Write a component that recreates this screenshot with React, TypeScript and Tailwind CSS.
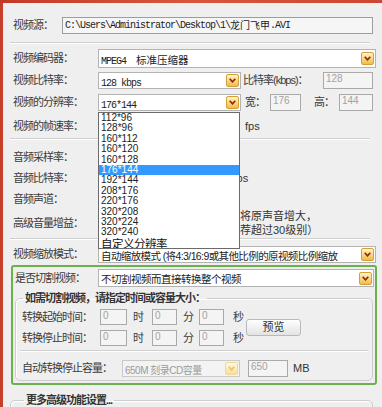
import React from 'react';

function Arrow({ disabled = false }: { disabled?: boolean }) {
  return (
    <div
      className={
        disabled
          ? 'w-[13px] h-[13px] shrink-0 rounded-[2px] border border-[#efd99a] bg-linear-to-b from-[#fff8dc] to-[#f7df94] flex items-center justify-center'
          : 'w-[13px] h-[13px] shrink-0 rounded-[2px] border border-[#d69f38] bg-linear-to-b from-[#fff4c4] to-[#f2bb43] flex items-center justify-center'
      }
    >
      <svg width="7" height="5" viewBox="0 0 7 5">
        <path
          d="M0.7 0.7 L3.5 3.8 L6.3 0.7"
          fill="none"
          stroke={disabled ? '#e9c66a' : '#8a2d08'}
          strokeWidth="1.7"
        />
      </svg>
    </div>
  );
}

const label = "text-[11px] tracking-[-1px] text-[#3b3b3b] whitespace-nowrap";
const mono = "font-['Liberation_Mono',monospace] text-[10px] tracking-[-1px] text-[#222]";

function Sel({ children, className = '', disabled = false }: { children: React.ReactNode; className?: string; disabled?: boolean }) {
  return (
    <div className={`h-full min-w-0 flex items-center border ${disabled ? 'border-[#c9c9c9] bg-[#f3f3f3]' : 'border-[#b3b3b3] bg-white'} pl-[2px] pr-[1px] overflow-hidden ${className}`}>
      <div className="flex-1 min-w-0 overflow-hidden whitespace-nowrap">{children}</div>
      <Arrow disabled={disabled} />
    </div>
  );
}

function Box({ v, className = '' }: { v: string; className?: string }) {
  return (
    <div className={`h-full shrink-0 border border-[#a9a9a9] bg-[#f4f4f4] pl-[2px] text-[10px] leading-[11px] text-[#a3a3a3] ${className}`}>{v}</div>
  );
}

function Sep({ className = '' }: { className?: string }) {
  return <div className={`border-t border-[#cfcfcf] border-b border-b-white ${className}`} />;
}

const sizes = ['112*96', '128*96', '160*112', '160*120', '160*128', '176*144', '192*144', '208*176', '220*176', '320*208', '320*224', '320*240'];

export default function App() {
  return (
    <div className="relative w-[382px] h-[407px] overflow-hidden bg-[#efefef] font-['Liberation_Sans','Noto_Sans_CJK_SC',sans-serif] text-[#333]">
      <div className="h-[3px] bg-linear-to-r from-[#c23a27] via-[#d9573b] to-[#cd4631]" />
      <div className="flex">
        <div className="w-[3px] h-[404px] bg-[#c53f2b]" />
        <div className="flex-1 min-w-0 pl-[10px] pr-[6px] flex flex-col">
          {/* 视频源 */}
          <div className="mt-[14px] h-[17px] flex items-center">
            <div className={`${label} w-[49px] shrink-0`}>视频源：</div>
            <div className="flex-1 min-w-0 mr-[3px] h-full border border-[#9d9d9d] bg-[#f6f6f6] flex items-center pl-[2px] overflow-hidden whitespace-nowrap">
              <span className={mono}>C:\Users\Administrator\Desktop\1\</span>
              <span className="text-[10px] text-[#222]">龙门飞甲</span>
              <span className={mono}>.AVI</span>
            </div>
          </div>
          <Sep className="mt-[8px] -ml-[3px] mr-[6px]" />
          {/* encoder */}
          <div className="mt-[5px] h-[19px] flex items-center">
            <div className={`${label} w-[85px] shrink-0`}>视频编码器：</div>
            <Sel className="flex-1">
              <span className={mono}>MPEG4</span>
              <span className="text-[10.5px] text-[#222] ml-[10px]">标准压缩器</span>
            </Sel>
          </div>
          {/* bitrate */}
          <div className="mt-[4px] h-[17px] flex items-center">
            <div className={`${label} w-[85px] shrink-0`}>视频比特率：</div>
            <Sel className="w-[143px] shrink-0">
              <span className={mono}>128 kbps</span>
            </Sel>
            <div className={`${label} w-[80px] shrink-0 ml-[2px]`}>比特率(kbps)：</div>
            <Box v="128" className="w-[50px]" />
          </div>
          {/* resolution */}
          <div className="mt-[5px] h-[17px] flex items-center">
            <div className={`${label} w-[85px] shrink-0`}>视频的分辨率：</div>
            <Sel className="w-[143px] shrink-0">
              <span className={mono}>176*144</span>
            </Sel>
            <div className={`${label} w-[25px] shrink-0 ml-[4px]`}>宽：</div>
            <Box v="176" className="w-[31px]" />
            <div className={`${label} w-[25px] shrink-0 ml-[13px]`}>高：</div>
            <Box v="144" className="w-[34px]" />
          </div>
          {/* fps */}
          <div className="mt-[7px] h-[17px] flex items-center">
            <div className={`${label} w-[85px] shrink-0`}>视频的帧速率：</div>
            <div className="w-[147px] shrink-0" />
            <div className="text-[11px] text-[#333]">fps</div>
          </div>
          <Sep className="mt-[3px] -ml-[3px] mr-[6px]" />
          <div className="mt-[9px] h-[17px] flex items-center">
            <div className={`${label} w-[85px]`}>音频采样率：</div>
          </div>
          <div className="mt-[4px] h-[17px] flex items-center">
            <div className={`${label} w-[85px] shrink-0`}>音频比特率：</div>
            <div className="w-[127px] shrink-0" />
            <div className="text-[11px] text-[#333]">kbps</div>
          </div>
          <div className="mt-[4px] h-[17px] flex items-center">
            <div className={`${label} w-[85px]`}>音频声道：</div>
          </div>
          <div className="mt-[1px] h-[28px] flex items-center">
            <div className={`${label} w-[85px] shrink-0`}>高级音量增益：</div>
            <div className="flex flex-col text-[11px] leading-[14px] text-[#333] whitespace-nowrap">
              <div className="ml-[131px]">可将原声音增大，</div>
              <div className="ml-[120px]">不推荐超过30级别）</div>
            </div>
          </div>
          <Sep className="mt-[1px] -ml-[3px] mr-[6px]" />
          {/* scale mode */}
          <div className="mt-[6px] h-[17px] flex items-center">
            <div className={`${label} w-[85px] shrink-0`}>视频缩放模式：</div>
            <Sel className="flex-1">
              <span className="text-[10.5px] tracking-[-0.6px] text-[#222]">自动缩放模式 (将4:3/16:9或其他比例的原视频比例缩放</span>
            </Sel>
          </div>
          {/* green box */}
          <div className="mt-[2px] -ml-[2px] -mr-[1px] border-2 border-[#6db14f] rounded-[3px] pb-[2px]">
            <div className="mt-[2px] h-[18px] flex items-center pl-[2px]">
              <div className={`${label} w-[83px] shrink-0`}>是否切割视频：</div>
              <Sel className="flex-1 mr-[1px]">
                <span className="text-[10.5px] tracking-[-0.5px] text-[#222]">不切割视频而直接转换整个视频</span>
              </Sel>
            </div>
            <fieldset className="mt-[4px] mx-[2px] border border-[#cdcdcd] rounded-[5px] shadow-[inset_1px_1px_0_#fff] pb-[3px]">
              <legend className="ml-[7px] px-[2px] text-[11px] leading-[14px] tracking-[-1px] font-bold text-[#333]">如需切割视频，请指定时间或容量大小：</legend>
              <div className="mt-[4px] flex items-center pl-[6px]">
                <div className="flex flex-col">
                  {['转换起始时间：', '转换停止时间：'].map((t, i) => (
                    <div key={t} className={`h-[16px] flex items-center ${i === 1 ? 'mt-[5px]' : ''}`}>
                      <div className={`${label} w-[78px]`}>{t}</div>
                      <Box v="0" className="w-[27px]" />
                      <div className={`${label} w-[25px] pl-[6px]`}>时</div>
                      <Box v="0" className="w-[25px]" />
                      <div className={`${label} w-[22px] pl-[6px]`}>分</div>
                      <Box v="0" className="w-[25px]" />
                      <div className={`${label} w-[21px] pl-[9px]`}>秒</div>
                    </div>
                  ))}
                </div>
                <div className="ml-[1px] w-[55px] h-[17px] rounded-[3px] border border-[#b9b9b9] bg-linear-to-b from-white to-[#e3e3e3] flex items-center justify-center text-[11px] text-[#333]">预览</div>
              </div>
              <Sep className="mt-[4px] mx-[4px]" />
              <div className="mt-[8px] h-[17px] flex items-center pl-[6px]">
                <div className={`${label} w-[100px] shrink-0`}>自动转换停止容量：</div>
                <Sel className="w-[118px] shrink-0" disabled>
                  <span className="text-[10px] tracking-[-0.5px] text-[#9a9a9a]">650M 刻录CD容量</span>
                </Sel>
                <Box v="650" className="w-[40px] ml-[8px]" />
                <div className="ml-[5px] text-[11px] text-[#333]">MB</div>
              </div>
            </fieldset>
          </div>
          <fieldset className="mt-[8px] -ml-[3px] mr-[3px] h-[30px] border border-[#cdcdcd] rounded-[5px] shadow-[inset_1px_1px_0_#fff]">
            <legend className="ml-[13px] px-[2px] text-[11px] leading-[14px] tracking-[-1px] font-bold text-[#333]">更多高级功能设置...</legend>
          </fieldset>
        </div>
      </div>
      {/* dropdown list */}
      <div className="absolute left-[98px] top-[112px] w-[142px] h-[137px] bg-white border border-[#6b6b6b] overflow-hidden">
        {sizes.map((s) => (
          <div
            key={s}
            className={`h-[10.4px] leading-[10.4px] pl-[2px] text-[10px] ${s === '176*144' ? 'bg-[#3399ff] text-white' : 'text-[#222]'}`}
          >
            {s}
          </div>
        ))}
        <div className="h-[12px] leading-[12px] pl-[2px] text-[11.5px] tracking-[-0.5px] text-[#111]">自定义分辨率</div>
      </div>
    </div>
  );
}
